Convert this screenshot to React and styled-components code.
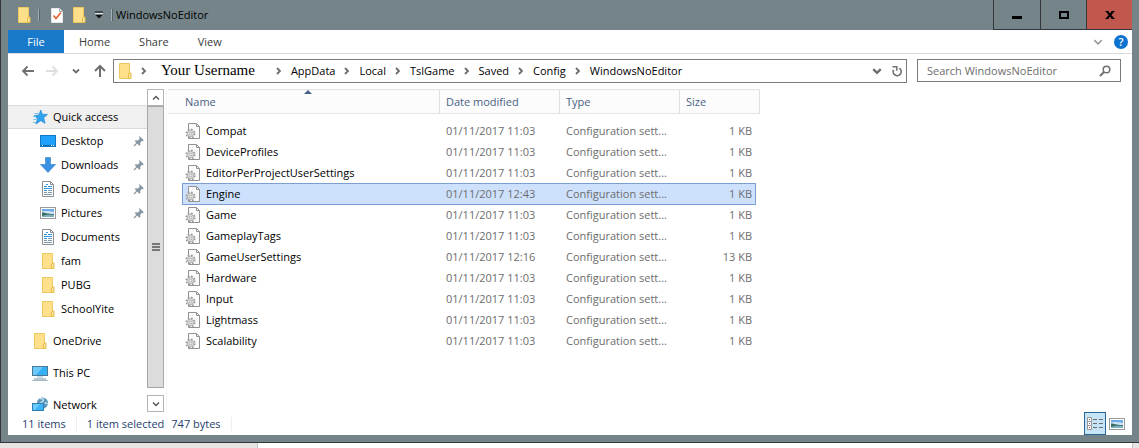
import React, { useState } from "react";
import styled, { createGlobalStyle, css } from "styled-components";

const PLACES = [
  { id: "quick", label: "Quick access", icon: "star", root: true, active: true },
  { id: "desktop", label: "Desktop", icon: "desktop", pinned: true },
  { id: "downloads", label: "Downloads", icon: "download", pinned: true },
  { id: "documents", label: "Documents", icon: "document", pinned: true },
  { id: "pictures", label: "Pictures", icon: "picture", pinned: true },
  { id: "documents2", label: "Documents", icon: "document" },
  { id: "fam", label: "fam", icon: "folder" },
  { id: "pubg", label: "PUBG", icon: "folder" },
  { id: "school", label: "SchoolYite", icon: "folder" },
  { id: "onedrive", label: "OneDrive", icon: "folder", root: true, spaced: true },
  { id: "pc", label: "This PC", icon: "pc", root: true, spaced: true },
  { id: "network", label: "Network", icon: "network", root: true, spaced: true },
];

const FILES = [
  { name: "Compat", date: "01/11/2017 11:03", size: "1 KB" },
  { name: "DeviceProfiles", date: "01/11/2017 11:03", size: "1 KB" },
  { name: "EditorPerProjectUserSettings", date: "01/11/2017 11:03", size: "1 KB" },
  { name: "Engine", date: "01/11/2017 12:43", size: "1 KB" },
  { name: "Game", date: "01/11/2017 11:03", size: "1 KB" },
  { name: "GameplayTags", date: "01/11/2017 11:03", size: "1 KB" },
  { name: "GameUserSettings", date: "01/11/2017 12:16", size: "13 KB" },
  { name: "Hardware", date: "01/11/2017 11:03", size: "1 KB" },
  { name: "Input", date: "01/11/2017 11:03", size: "1 KB" },
  { name: "Lightmass", date: "01/11/2017 11:03", size: "1 KB" },
  { name: "Scalability", date: "01/11/2017 11:03", size: "1 KB" },
];

const PATH = ["AppData", "Local", "TslGame", "Saved", "Config", "WindowsNoEditor"];

// icons
const FolderIcon = ({ width = 16 }) => (
  <svg width={width} height="16" viewBox={`0 0 ${width} 16`}>
    <path d="M2.500.5h10v15h-10z" fill="#ffe08a" stroke="#efc95f" />
    <path d="M11.500 15.500v-4.500l1-1h1.500v5.500z" fill="#ffe9a8" stroke="#e6bb44" />
  </svg>
);

const StarIcon = () => (
  <svg width="16" height="16" viewBox="0 0 16 16">
    <path d="M8.800 1l1.500 4.200 5.200.2-3.800 3.300 1.400 5.600-4.400-2.600-4.700 3.400 1.400-5.500L2 6.800l4.800-.9z" fill="#2fa4ee" stroke="#1b7fcb" strokeWidth=".6" />
    <path d="M2.500 4.500h4M1 7.500h3M1.500 10.500h3M1 13.500h3" stroke="#74bff0" />
  </svg>
);

const DesktopIcon = () => (
  <svg width="16" height="16" viewBox="0 0 16 16">
    <rect x=".5" y="2.500" width="15" height="11" fill="#1ea0fb" stroke="#1479c4" />
    <path d="M1 12.500h14" stroke="#0b65ad" />
    <path d="M2 12.500h1M11 12.500h1M13 12.500h1" stroke="#fff" />
  </svg>
);

const DownloadIcon = () => (
  <svg width="16" height="16" viewBox="0 0 16 16">
    <path d="M5.500.5h5v7h5L8 15.500.5 7.500h5z" fill="#3a93e0" stroke="#2a7fcc" strokeWidth=".6" />
  </svg>
);

const DocumentIcon = () => (
  <svg width="16" height="16" viewBox="0 0 16 16">
    <path d="M2.500.5h8l3 3v12h-11z" fill="#fff" stroke="#8a8f94" />
    <path d="M10.500.5v3h3" fill="none" stroke="#8a8f94" />
    <path d="M6 3.500h2M4 5.500h3M8 5.500h4M4 7.500h8M4 9.500h3" stroke="#2e96e0" />
    <path d="M8 9.500h4M4 11.500h3M8 11.500h4M4 13.500h8" stroke="#7e98aa" />
  </svg>
);

const PictureIcon = () => (
  <svg width="16" height="16" viewBox="0 0 16 16">
    <rect x=".5" y="2.500" width="15" height="11" fill="#fff" stroke="#9a9a9a" />
    <path d="M2 4h12v4H2z" fill="#6fa9e6" />
    <path d="M2 6.500c3-1 8-.5 12 .5v2H2z" fill="#cfe4f4" />
    <path d="M2 7.500c3 0 5 1.500 12 1.500v3H2z" fill="#3c6d62" />
    <path d="M2 11c4-1.500 8-1.500 12-1v2H2z" fill="#7fb0c0" />
  </svg>
);

const PcIcon = () => (
  <svg width="16" height="16" viewBox="0 0 16 16">
    <rect x=".5" y="1.500" width="15" height="9" fill="#35b0f5" stroke="#4a7896" />
    <path d="M1 2h10L4 10H1z" fill="#6ccafb" />
    <path d="M5 12h6M0 15.500h16" stroke="#a5b9c8" />
    <path d="M2 14h12" stroke="#7390a5" />
  </svg>
);

const NetworkIcon = () => (
  <svg width="16" height="16" viewBox="0 0 16 16">
    <circle cx="10.500" cy="6" r="5.500" fill="#5f95b9" />
    <path d="M7.500 2c3-1.500 4.500.5 3.500 2s-2 1-3 2.500M12.500 6.500c1-1 2-.5 3 .5" stroke="#b5daec" strokeWidth="1.600" fill="none" />
    <rect x=".5" y="6.500" width="11" height="7" fill="#3db4f7" stroke="#2f7fb5" />
    <path d="M1 7h7l-5 6H1z" fill="#6ccafb" />
    <path d="M3 15.500h6" stroke="#7fa5bd" />
  </svg>
);

const ICONS = {
  star: StarIcon,
  desktop: DesktopIcon,
  download: DownloadIcon,
  document: DocumentIcon,
  picture: PictureIcon,
  folder: FolderIcon,
  pc: PcIcon,
  network: NetworkIcon,
};

const PinIcon = () => (
  <svg width="12" height="12" viewBox="0 0 12 12">
    <path d="M6.500 1l4.500 4.500-1.200.6-.6-.3-2 2 .2 2.200-1 .8L1.800 6.200l.8-1 2.200.2 2-2-.7-1.400z" fill="#8796a3" />
    <path d="M4.300 7.700L1 11" stroke="#8796a3" strokeWidth="1.200" />
  </svg>
);

const IniIcon = () => (
  <svg width="16" height="16" viewBox="0 0 16 16">
    <path d="M3.500.5h8l3 3v12h-11z" fill="#fbfbfb" stroke="#929292" />
    <path d="M11.500.5v3h3" fill="none" stroke="#929292" />
    <circle cx="5.500" cy="10.500" r="4.300" fill="none" stroke="#9a9a9a" strokeWidth="1.500" strokeDasharray="1.700 1.677" />
    <circle cx="5.500" cy="10.500" r="3.300" fill="#dedede" stroke="#a2a2a2" strokeWidth=".8" />
    <circle cx="5.500" cy="10.500" r="1.300" fill="#fff" stroke="#9a9a9a" strokeWidth=".8" />
  </svg>
);

const CheckPageIcon = () => (
  <svg width="12" height="15" viewBox="0 0 12 15">
    <path d="M.5.5h8l3 3v11H.5z" fill="#fff" stroke="#e6e9ea" />
    <path d="M8.500.5v3h3" fill="none" stroke="#a9b0b3" />
    <path d="M2.500 7.500L5 10.500l5-6" fill="none" stroke="#e8612c" strokeWidth="1.600" />
  </svg>
);

const Chevron = ({ size = 8, color = "#6d6d6d", d = "M2 1l3 3-3 3", width = 1.8 }) => (
  <svg width={size} height={size} viewBox="0 0 8 8">
    <path d={d} fill="none" stroke={color} strokeWidth={width} />
  </svg>
);

const DOWN = "M1 2.500l3 3 3-3";
const UP = "M1 5.500l3-3 3 3";

const App = () => {
  const [selected, setSelected] = useState("Engine");
  const [query, setQuery] = useState("");

  return (
    <>
      <GlobalStyle />
      <Screen>
        <Window>
          <TitleBar>
            <QuickTools>
              <FolderIcon />
              <Divider />
              <ToolButton aria-label="Properties">
                <CheckPageIcon />
              </ToolButton>
              <ToolButton aria-label="New folder">
                <FolderIcon />
              </ToolButton>
              <ToolButton aria-label="Customize toolbar" $small>
                <svg width="8" height="8" viewBox="0 0 8 8">
                  <path d="M0 1h8" stroke="#111" />
                  <path d="M0 2.500h8" stroke="#dfe3e4" />
                  <path d="M.5 4h7L4 7.500z" fill="#111" />
                </svg>
              </ToolButton>
              <Divider />
            </QuickTools>
            <Title>WindowsNoEditor</Title>
            <CaptionButton aria-label="Minimize" $wide>
              <svg width="12" height="12" viewBox="0 0 12 12">
                <path d="M1 8.500h10" stroke="#000" strokeWidth="3" />
              </svg>
            </CaptionButton>
            <CaptionButton aria-label="Maximize">
              <svg width="12" height="12" viewBox="0 0 12 12">
                <path d="M2 3h8v6H2z" fill="none" stroke="#000" strokeWidth="2" />
              </svg>
            </CaptionButton>
            <CaptionButton aria-label="Close" $close>
              <svg width="12" height="12" viewBox="0 0 12 12">
                <path d="M3 2.500l6 7M9 2.500l-6 7" stroke="#000" strokeWidth="2" />
                <path d="M1.500 2.500h3M7.500 2.500h3M1.500 9.500h3M7.500 9.500h3" stroke="#000" />
              </svg>
            </CaptionButton>
          </TitleBar>

          <Ribbon>
            <Tab $file>File</Tab>
            <Tab>Home</Tab>
            <Tab>Share</Tab>
            <Tab>View</Tab>
            <RibbonEnd>
              <ToolButton aria-label="Expand the ribbon">
                <Chevron size={10} color="#9a9a9a" d={DOWN} width={1.2} />
              </ToolButton>
              <HelpButton aria-label="Help">?</HelpButton>
            </RibbonEnd>
          </Ribbon>

          <NavBar>
            <NavButtons>
              <ToolButton aria-label="Back">
                <svg width="14" height="12" viewBox="0 0 14 12">
                  <path d="M13 6H2M6.500 1.500L2 6l4.500 4.500" fill="none" stroke="#707070" strokeWidth="1.800" />
                </svg>
              </ToolButton>
              <ToolButton aria-label="Forward">
                <svg width="14" height="12" viewBox="0 0 14 12">
                  <path d="M1 6h11M7.500 1.500L12 6l-4.500 4.500" fill="none" stroke="#dedede" strokeWidth="1.800" />
                </svg>
              </ToolButton>
              <ToolButton aria-label="Recent locations">
                <Chevron d={DOWN} />
              </ToolButton>
              <ToolButton aria-label="Up">
                <svg width="12" height="14" viewBox="0 0 12 14">
                  <path d="M6 13V2M1 7l5-5 5 5" fill="none" stroke="#707070" strokeWidth="2" />
                </svg>
              </ToolButton>
            </NavButtons>
            <AddressBar aria-label="Address">
              <FolderIcon width={15} />
              <Chevron />
              <UserCrumb href="#user">Your Username</UserCrumb>
              {PATH.map((part) => (
                <React.Fragment key={part}>
                  <Chevron />
                  <Crumb href={`#${part}`}>{part}</Crumb>
                </React.Fragment>
              ))}
              <AddressEnd>
                <ToolButton aria-label="Previous locations">
                  <Chevron size={10} d={DOWN} />
                </ToolButton>
                <ToolButton aria-label="Refresh">
                  <svg width="12" height="12" viewBox="0 0 12 12">
                    <path d="M8.300 3.200A4 4 0 1 1 2.600 4.800" fill="none" stroke="#707070" strokeWidth="1.700" />
                    <path d="M1.500 1.800h4.300v4" fill="none" stroke="#707070" strokeWidth="1.500" />
                  </svg>
                </ToolButton>
              </AddressEnd>
            </AddressBar>
            <SearchBox>
              <SearchInput
                aria-label="Search WindowsNoEditor"
                placeholder="Search WindowsNoEditor"
                value={query}
                onChange={(e) => setQuery(e.target.value)}
              />
              <svg width="12" height="12" viewBox="0 0 12 12">
                <circle cx="7.500" cy="4.500" r="3.300" fill="none" stroke="#707070" strokeWidth="1.500" />
                <path d="M5 7L1 11" stroke="#707070" strokeWidth="2" />
              </svg>
            </SearchBox>
          </NavBar>

          <Body>
            <Sidebar>
              {PLACES.map((place) => {
                const Icon = ICONS[place.icon];
                return (
                  <Place
                    key={place.id}
                    href={`#${place.id}`}
                    $root={place.root}
                    $active={place.active}
                    $spaced={place.spaced}
                  >
                    <Icon />
                    <PlaceName>{place.label}</PlaceName>
                    {place.pinned && <PinIcon />}
                  </Place>
                );
              })}
            </Sidebar>
            <ScrollBar>
              <ScrollButton aria-label="Scroll up">
                <Chevron color="#555" d={UP} width={1.4} />
              </ScrollButton>
              <Thumb>
                <svg width="8" height="8" viewBox="0 0 8 8">
                  <path d="M0 1h8M0 4h8M0 7h8" stroke="#555" strokeWidth="1.500" />
                </svg>
              </Thumb>
              <ScrollButton aria-label="Scroll down">
                <Chevron color="#555" d={DOWN} width={1.4} />
              </ScrollButton>
            </ScrollBar>

            <FilePane>
              <FileTable>
                <thead>
                  <HeadRow>
                    <HeadCell $first>
                      Name
                      <SortMark>
                        <svg width="8" height="4" viewBox="0 0 8 4">
                          <path d="M0 4l4-4 4 4z" fill="#4a6184" />
                        </svg>
                      </SortMark>
                    </HeadCell>
                    <HeadCell>Date modified</HeadCell>
                    <HeadCell>Type</HeadCell>
                    <HeadCell>Size</HeadCell>
                  </HeadRow>
                </thead>
                <FileRows>
                  {FILES.map((file) => (
                    <FileRow
                      key={file.name}
                      $selected={file.name === selected}
                      onClick={() => setSelected(file.name)}
                    >
                      <NameCell>
                        <IniIcon />
                        {file.name}
                      </NameCell>
                      <Cell>{file.date}</Cell>
                      <Cell>Configuration sett...</Cell>
                      <Cell $right>{file.size}</Cell>
                    </FileRow>
                  ))}
                </FileRows>
              </FileTable>
            </FilePane>
          </Body>

          <StatusBar>
            <StatusText>11 items</StatusText>
            <StatusText>
              <span>1 item selected</span>
              <span>747 bytes</span>
            </StatusText>
            <ViewButtons>
              <ViewButton aria-label="Details view" $on>
                <svg width="18" height="14" viewBox="0 0 18 14">
                  <path d="M1.500.5h4v12h-4zM1.500 4.500h4M1.500 8.500h4" fill="#fff" stroke="#999" />
                  <path d="M3 2.500h1M3 6.500h1" stroke="#567" />
                  <path d="M3 10.500h1" stroke="#c33" />
                  <path d="M7 2.500h4M13 2.500h4M7 6.500h4M13 6.500h4M7 10.500h4M13 10.500h4" stroke="#6c6c6c" />
                </svg>
              </ViewButton>
              <ViewButton aria-label="Large thumbnails">
                <PictureIcon />
              </ViewButton>
            </ViewButtons>
          </StatusBar>
        </Window>
        <Backdrop>
          <BackPanel />
          <BackEdge />
        </Backdrop>
      </Screen>
    </>
  );
};

export default App;

const GlobalStyle = createGlobalStyle`
  * {
    box-sizing: border-box;
  }
  body {
    margin: 0;
    background: #fff;
    font-family: "Open Sans", "Noto Sans", sans-serif;
    font-size: 11px;
    line-height: 14px;
    color: #000;
  }
  button, input {
    font: inherit;
    color: inherit;
    border: 0;
    padding: 0;
    background: none;
  }
  a {
    color: inherit;
    text-decoration: none;
  }
  svg {
    display: block;
    flex-shrink: 0;
  }
`;

const Screen = styled.div`
  height: 100vh;
  display: flex;
  flex-direction: column;
`;

const Window = styled.div`
  flex: 1;
  min-height: 0;
  display: flex;
  flex-direction: column;
  padding: 0 7px 7px;
  background: #748488;
  border-left: 1px solid #33363a;
  border-bottom: 1px solid #33363a;
`;

const TitleBar = styled.header`
  display: flex;
  height: 30px;
  flex-shrink: 0;
`;

const QuickTools = styled.div`
  display: flex;
  align-items: center;
  gap: 6px;
  padding-left: 8px;
`;

const Divider = styled.span`
  width: 2px;
  height: 12px;
  background: #a3afb2;
  border-right: 1px solid #56646a;
  margin-right: 3px;
`;

const ToolButton = styled.button`
  display: flex;
  align-items: center;
  justify-content: center;
  min-width: ${(props) => (props.$small ? "12px" : "16px")};
`;

const Title = styled.h1`
  flex: 1;
  margin: 0;
  font-size: 11px;
  font-weight: 400;
  line-height: 30px;
`;

const CaptionButton = styled.button`
  display: flex;
  align-items: center;
  justify-content: center;
  width: ${(props) => (props.$wide ? "47px" : "46px")};
  border-left: 1px solid #33363a;
  border-bottom: 1px solid #33363a;
  background: ${(props) => (props.$close ? "#c1584e" : "none")};
`;

const Ribbon = styled.nav`
  display: flex;
  gap: 1px;
  height: 24px;
  flex-shrink: 0;
  background: #fff;
  border-bottom: 1px solid #dadbdc;
`;

const Tab = styled.button`
  padding: 0 14px;
  color: #3b3b3b;
  ${(props) =>
    props.$file &&
    css`
      width: 56px;
      color: #fff;
      background: #1979ca;
    `}
`;

const RibbonEnd = styled.div`
  display: flex;
  align-items: center;
  gap: 8px;
  margin-left: auto;
  padding-right: 4px;
`;

const HelpButton = styled.button`
  width: 14px;
  height: 14px;
  border-radius: 50%;
  font-weight: 600;
  color: #fff;
  background: #0c72cf;
`;

const NavBar = styled.div`
  display: flex;
  align-items: flex-start;
  gap: 10px;
  height: 35px;
  flex-shrink: 0;
  padding: 5px 11px 0 12px;
  background: #fff;
`;

const NavButtons = styled.div`
  display: flex;
  align-items: center;
  gap: 8px;
  height: 24px;
  margin-right: -5px;
`;

const AddressBar = styled.nav`
  flex: 1;
  display: flex;
  align-items: center;
  gap: 8px;
  height: 24px;
  padding: 0 1px 0 3px;
  border: 1px solid #7b7b7b;
`;

const Crumb = styled.a`
  white-space: nowrap;
`;

const UserCrumb = styled(Crumb)`
  padding: 0 12px 3px 5px;
  font-family: "Liberation Serif", serif;
  font-size: 15px;
`;

const AddressEnd = styled.div`
  display: flex;
  gap: 4px;
  margin-left: auto;
`;

const SearchBox = styled.div`
  display: flex;
  align-items: center;
  width: 204px;
  height: 23px;
  padding: 0 9px;
  border: 1px solid #7b7b7b;
`;

const SearchInput = styled.input`
  flex: 1;
  min-width: 0;
  outline: none;
  &::placeholder {
    color: #6d6d6d;
    opacity: 1;
  }
`;

const Body = styled.div`
  flex: 1;
  min-height: 0;
  display: flex;
  background: #fff;
`;

const Sidebar = styled.nav`
  width: 139px;
  padding-top: 16px;
  overflow: hidden;
`;

const Place = styled.a`
  display: flex;
  align-items: center;
  gap: 5px;
  height: 24px;
  margin-top: ${(props) => (props.$spaced ? "8px" : "0")};
  padding: 0 2px 0 ${(props) => (props.$root ? "24px" : "32px")};
  ${(props) =>
    props.$active &&
    css`
      background: #f0f0f0;
      box-shadow: inset 0 1px #dadada, inset 0 -1px #dadada;
    `}
`;

const PlaceName = styled.span`
  flex: 1;
  white-space: nowrap;
`;

const ScrollBar = styled.div`
  display: flex;
  flex-direction: column;
  width: 17px;
`;

const ScrollButton = styled.button`
  display: flex;
  align-items: center;
  justify-content: center;
  height: 17px;
  flex-shrink: 0;
  border: 1px solid #b4b4b4;
`;

const Thumb = styled.div`
  flex: 1;
  display: flex;
  align-items: center;
  justify-content: center;
  margin-bottom: 7px;
  background: #dcdcdc;
  border: 1px solid #a6a6a6;
`;

const FilePane = styled.main`
  flex: 1;
  min-width: 0;
  margin-left: 2px;
  padding-left: 1px;
  border-left: 1px solid #f4f4f4;
  overflow: hidden;
`;

const FileTable = styled.table`
  display: block;
  width: 592px;
  thead {
    display: block;
  }
`;

const HeadRow = styled.tr`
  display: grid;
  grid-template-columns: 272px 120px 120px 80px;
  height: 25px;
  background: #fcfcfc;
  border-top: 1px solid #e2e3e5;
  border-bottom: 1px solid #e2e3e5;
`;

const HeadCell = styled.th`
  position: relative;
  padding: 0 0 0 ${(props) => (props.$first ? "17px" : "6px")};
  font-weight: 400;
  line-height: 24px;
  text-align: left;
  color: #4a6184;
  border-right: 1px solid #dfe0e2;
`;

const SortMark = styled.span`
  position: absolute;
  top: 0;
  left: 50%;
`;

const FileRows = styled.tbody`
  display: block;
  padding: 7px 4px 0 14px;
`;

const FileRow = styled.tr`
  display: grid;
  grid-template-columns: 257px 120px 120px 1fr;
  align-items: center;
  height: 22px;
  margin-top: -1px;
  border: 1px solid ${(props) => (props.$selected ? "#7a9fd0" : "transparent")};
  background: ${(props) => (props.$selected ? "#cde1fd" : "none")};
`;

const Cell = styled.td`
  padding: 0 3px 0 6px;
  white-space: nowrap;
  text-align: ${(props) => (props.$right ? "right" : "left")};
  color: #6d6d6d;
`;

const NameCell = styled.td`
  display: flex;
  align-items: center;
  gap: 5px;
  padding: 0 0 0 2px;
`;

const StatusBar = styled.footer`
  display: flex;
  align-items: center;
  height: 23px;
  flex-shrink: 0;
  padding-left: 4px;
  color: #26406b;
  background: #fff;
`;

const StatusText = styled.div`
  display: flex;
  gap: 7px;
  padding: 0 10px;
  border-right: 1px solid #efefef;
`;

const ViewButtons = styled.div`
  display: flex;
  margin-left: auto;
  padding-right: 4px;
`;

const ViewButton = styled.button`
  display: flex;
  align-items: center;
  justify-content: center;
  width: 22px;
  height: 23px;
  ${(props) =>
    props.$on &&
    css`
      background: #c5e4f7;
      border: 1px solid #2a6496;
    `}
`;

const Backdrop = styled.div`
  display: flex;
  justify-content: space-between;
  height: 5px;
`;

const BackPanel = styled.div`
  width: 258px;
  background: #e6e5e4;
  border-right: 1px solid #c4c4c4;
`;

const BackEdge = styled.div`
  width: 7px;
  background: #e6e5e4;
  border-left: 1px solid #c4c4c4;
`;
